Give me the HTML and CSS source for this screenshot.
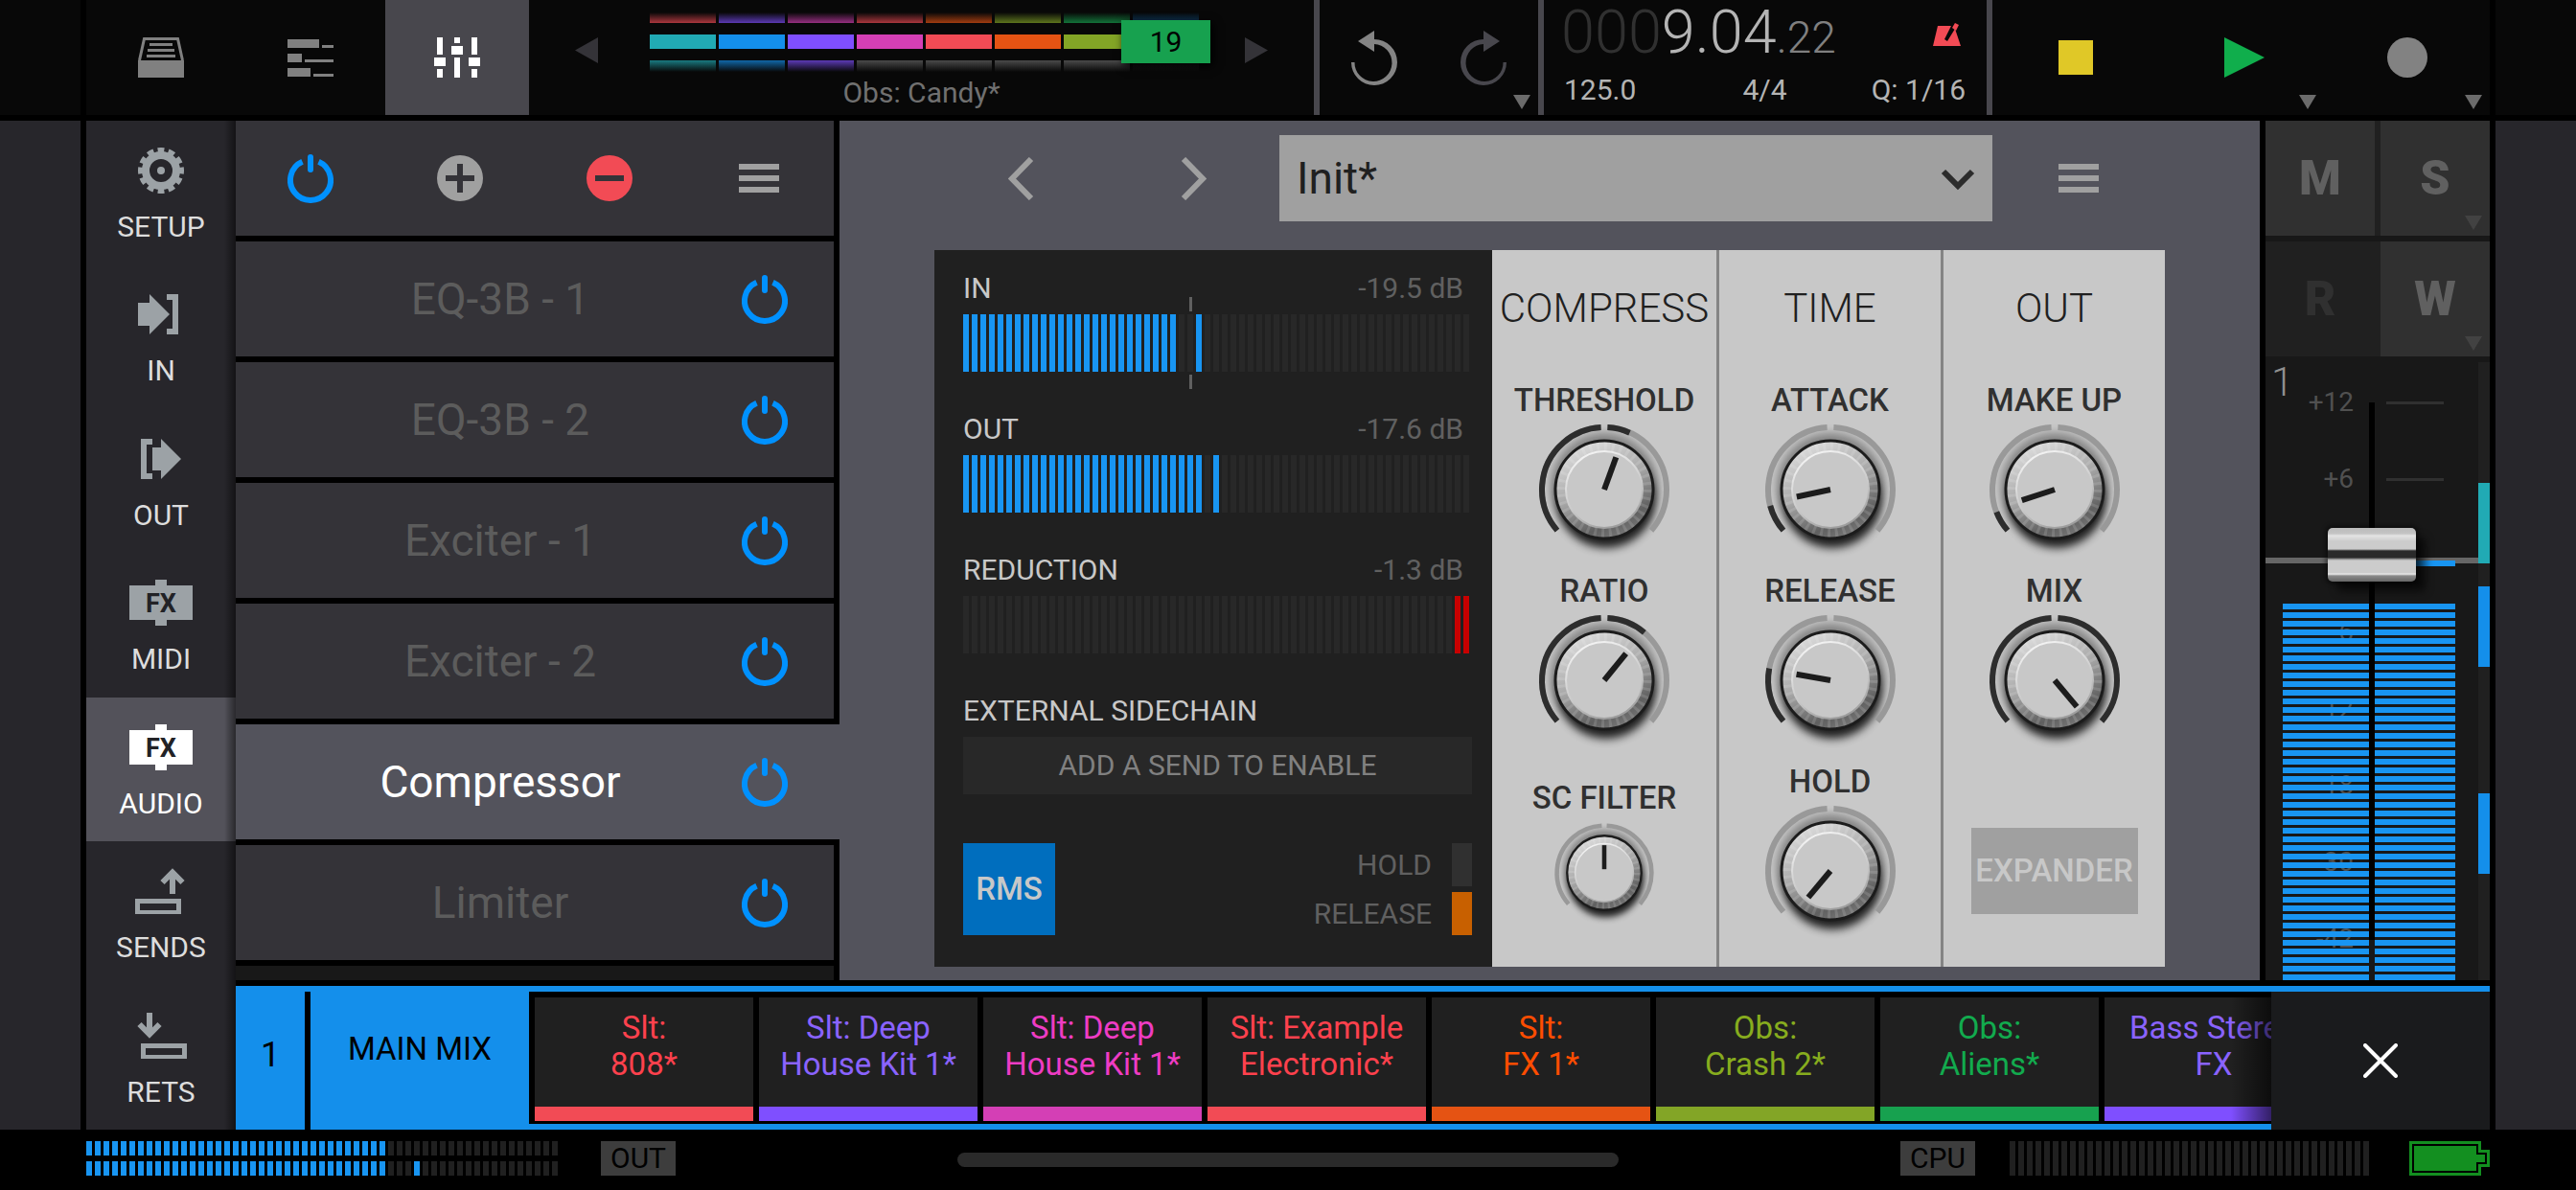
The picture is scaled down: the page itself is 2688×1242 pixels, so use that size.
FILE: index.html
```
<!DOCTYPE html>
<html lang="en">
<head>
    <meta charset="UTF-8">
    <meta name="viewport" content="width=device-width, initial-scale=1.0">
    <title>Mixer</title>
    <link rel="stylesheet" href="styles.css">
</head>
<body>
    <!-- Shared icons -->
    <svg class="sprite" aria-hidden="true">
        <defs>
            <linearGradient id="bevel" x1="0.3" y1="0" x2="0.75" y2="1">
                <stop offset="0" stop-color="#dedede"/>
                <stop offset="0.45" stop-color="#a8a8a8"/>
                <stop offset="0.8" stop-color="#606060"/>
                <stop offset="1" stop-color="#7c7c7c"/>
            </linearGradient>
            <linearGradient id="rim" x1="0.3" y1="0" x2="0.7" y2="1">
                <stop offset="0" stop-color="#f4f4f4"/>
                <stop offset="0.6" stop-color="#c8c8c8"/>
                <stop offset="1" stop-color="#999"/>
            </linearGradient>
            <filter id="soft" x="-30%" y="-30%" width="160%" height="160%">
                <feGaussianBlur stdDeviation="5"/>
            </filter>
            <symbol id="power" viewBox="0 0 48 51">
                <path d="M15.500 7.800a21 21 0 1 0 17 0" fill="none" stroke="currentColor" stroke-width="6"/>
                <path d="M24 3v13" stroke="currentColor" stroke-width="6" stroke-linecap="round"/>
            </symbol>
            <symbol id="menu" viewBox="0 0 42 30">
                <path d="M0 0h42v6H0zM0 12h42v6H0zM0 24h42v6H0z" fill="currentColor"/>
            </symbol>
            <symbol id="undo" viewBox="0 0 48 57">
                <path d="M0 33a24 24 0 1 0 24-24v5a19.500 19.500 0 1 1-20.500 19z" fill="currentColor"/>
                <path d="M24 0v22L7 11z" fill="currentColor"/>
            </symbol>
            <symbol id="corner" viewBox="0 0 18 15">
                <path d="M0 0h18L9 15z" fill="currentColor"/>
            </symbol>
            <symbol id="fx" viewBox="0 0 66 48">
                <path d="M0 6h27V0h12v6h27v36H39v6H27v-6H0z" fill="currentColor"/>
                <text x="33" y="34" text-anchor="middle" class="fx-text">FX</text>
            </symbol>
            <symbol id="dial" viewBox="0 0 150 150">
                <circle cx="75" cy="72" r="56" fill="#000" opacity="0.35" filter="url(#soft)"/>
                <circle cx="77" cy="85" r="51" fill="#000" opacity="0.8" filter="url(#soft)"/>
                <circle cx="75" cy="75" r="51" fill="url(#bevel)" stroke="#1c1c1c" stroke-width="3"/>
                <circle cx="75" cy="75" r="45" fill="none" stroke="#fff" stroke-opacity="0.13" stroke-width="9" pathLength="144" stroke-dasharray="1.500 2.500"/>
                <circle cx="75" cy="75" r="40" fill="#c8c8c8" stroke="url(#rim)" stroke-width="2"/>
            </symbol>
        </defs>
    </svg>

    <header class="row topbar">
        <div class="edge"></div>
        <div class="topbar-content">
            <nav class="view-tabs">
                <button class="view-tab" aria-label="Browser">
                    <svg width="48" height="42" viewBox="0 0 48 42">
                        <path d="M0 24h48v18H0z" fill="currentColor"/>
                        <path d="M1.500 24L6.500 1.500h35L46.500 24" fill="none" stroke="currentColor" stroke-width="3"/>
                        <path d="M12 6h24v3H12zM10 12h28v3H10zM9 18h30v3H9z" fill="currentColor"/>
                    </svg>
                </button>
                <button class="view-tab" aria-label="Timeline">
                    <svg width="48" height="39" viewBox="0 0 48 39">
                        <path d="M0 0h33v9H0zM36 6h12v3H36zM0 15h15v9H0zM18 21h30v3H18zM0 30h24v9H0zM27 36h21v3H27z" fill="currentColor"/>
                    </svg>
                </button>
                <button class="view-tab active" aria-label="Mixer">
                    <svg width="48" height="42" viewBox="0 0 48 42">
                        <path d="M3 0h6v18H3zM0 21h12v9H0zM3 33h6v9H3zM21 0h6v6h-6zM18 9h12v9H18zM21 21h6v21h-6zM39 0h6v18h-6zM36 21h12v9H36zM39 33h6v9h-6z" fill="currentColor"/>
                    </svg>
                </button>
            </nav>

            <div class="track-nav">
                <div class="track-nav-row">
                    <button class="track-arrow" aria-label="Previous track">
                        <svg width="24" height="27" viewBox="0 0 24 27"><path d="M24 0v27L0 13.500z" fill="currentColor"/></svg>
                    </button>
                    <div class="track-grid">
                        <i class="cell above red"></i><i class="cell above purple"></i><i class="cell above pink"></i><i class="cell above red"></i><i class="cell above orange"></i><i class="cell above olive"></i><i class="cell above green"></i><i class="cell above blue"></i>
                        <i class="cell teal"></i><i class="cell blue"></i><i class="cell purple"></i><i class="cell pink"></i><i class="cell red"></i><i class="cell orange"></i><i class="cell olive"></i><i class="cell green"></i>
                        <i class="cell below teal"></i><i class="cell below blue"></i><i class="cell below purple"></i><i class="cell below grey"></i><i class="cell below grey"></i><i class="cell below grey"></i><i class="cell below grey"></i><i class="cell below dark"></i>
                        <span class="track-badge">19</span>
                    </div>
                    <button class="track-arrow" aria-label="Next track">
                        <svg width="24" height="27" viewBox="0 0 24 27"><path d="M0 0v27l24-13.500z" fill="currentColor"/></svg>
                    </button>
                </div>
                <div class="track-name">Obs: Candy*</div>
            </div>

            <div class="history">
                <button class="tool" aria-label="Undo"><svg width="48" height="57"><use href="#undo"/></svg></button>
                <button class="tool redo" aria-label="Redo"><svg width="48" height="57"><use href="#undo"/></svg></button>
                <svg class="corner" width="18" height="15"><use href="#corner"/></svg>
            </div>

            <div class="counter">
                <div class="counter-time">
                    <div class="position"><span class="zeros">000</span>9.04<span class="ticks">.22</span></div>
                    <svg width="30" height="24" viewBox="0 0 30 24">
                        <path d="M5 3h14l-7 14 3 2 8-13 6 18H0z" fill="#f24b55"/>
                        <path d="M20 5l3-5 4 2-3 6z" fill="#f24b55"/>
                    </svg>
                </div>
                <div class="counter-info">
                    <span>125.0</span>
                    <span>4/4</span>
                    <span class="quantize">Q: 1/16</span>
                </div>
            </div>

            <div class="transport">
                <button class="transport-btn" aria-label="Stop"><span class="stop"></span></button>
                <button class="transport-btn" aria-label="Play">
                    <svg width="48" height="42" viewBox="-6 0 48 42"><path d="M0 0v42l42-21z" fill="#10ae4c"/></svg>
                    <svg class="corner" width="18" height="15"><use href="#corner"/></svg>
                </button>
                <button class="transport-btn" aria-label="Record">
                    <span class="record"></span>
                    <svg class="corner" width="18" height="15"><use href="#corner"/></svg>
                </button>
            </div>
        </div>
        <div class="edge"></div>
    </header>

    <main class="row main">
        <div class="edge"></div>
        <div class="content">
            <nav class="sidebar">
                <button class="side-item">
                    <svg width="48" height="48" viewBox="0 0 48 48" fill="none" stroke="currentColor">
                        <circle cx="24" cy="24" r="21.500" stroke-width="5" pathLength="120" stroke-dasharray="6 4" transform="rotate(-9 24 24)"/>
                        <circle cx="24" cy="24" r="16" stroke-width="8"/>
                        <circle cx="24" cy="24" r="4" fill="currentColor" stroke="none"/>
                    </svg>
                    <span>SETUP</span>
                </button>
                <button class="side-item">
                    <svg width="48" height="48" viewBox="0 0 48 48" fill="currentColor">
                        <path d="M0 12h12V3l21 21-21 21v-9H0zM30 3h12v42H30v-6h6V9h-6z"/>
                    </svg>
                    <span>IN</span>
                </button>
                <button class="side-item">
                    <svg width="48" height="48" viewBox="0 0 48 48" fill="currentColor">
                        <path d="M3 3h12v6H9v30h6v6H3zM15 12h9V3l21 21-21 21v-9h-9z"/>
                    </svg>
                    <span>OUT</span>
                </button>
                <button class="side-item">
                    <svg width="66" height="48"><use href="#fx"/></svg>
                    <span>MIDI</span>
                </button>
                <button class="side-item active">
                    <svg width="66" height="48"><use href="#fx"/></svg>
                    <span>AUDIO</span>
                </button>
                <button class="side-item">
                    <svg width="54" height="48" viewBox="0 0 54 48" fill="none" stroke="currentColor">
                        <rect x="2.500" y="34.500" width="43" height="12" stroke-width="5"/>
                        <path d="M39 27V4M28.500 15L39 4.500 49.500 15" stroke-width="6"/>
                    </svg>
                    <span>SENDS</span>
                </button>
                <button class="side-item">
                    <svg width="54" height="48" viewBox="0 0 54 48" fill="none" stroke="currentColor">
                        <rect x="8.500" y="34.500" width="43" height="12" stroke-width="5"/>
                        <path d="M15 0v23M4.500 12L15 22.500 25.500 12" stroke-width="6"/>
                    </svg>
                    <span>RETS</span>
                </button>
            </nav>

            <div class="workspace">
                <div class="upper">
                    <section class="rack">
                        <div class="rack-header">
                            <button class="rack-tool power" aria-label="Bypass all"><svg width="48" height="51"><use href="#power"/></svg></button>
                            <button class="rack-tool" aria-label="Add effect">
                                <svg width="48" height="48" viewBox="0 0 48 48"><circle cx="24" cy="24" r="24" fill="currentColor"/><path d="M21 9h6v12h12v6H27v12h-6V27H9v-6h12z" fill="#343338"/></svg>
                            </button>
                            <button class="rack-tool remove" aria-label="Remove effect">
                                <svg width="48" height="48" viewBox="0 0 48 48"><circle cx="24" cy="24" r="24" fill="currentColor"/><path d="M9 21h30v6H9z" fill="#343338"/></svg>
                            </button>
                            <button class="rack-tool" aria-label="Rack menu"><svg width="42" height="30"><use href="#menu"/></svg></button>
                        </div>
                        <div class="fx-row"><span class="fx-name">EQ-3B - 1</span><button class="power" aria-label="Toggle EQ-3B - 1"><svg width="48" height="51"><use href="#power"/></svg></button></div>
                        <div class="fx-row"><span class="fx-name">EQ-3B - 2</span><button class="power" aria-label="Toggle EQ-3B - 2"><svg width="48" height="51"><use href="#power"/></svg></button></div>
                        <div class="fx-row"><span class="fx-name">Exciter - 1</span><button class="power" aria-label="Toggle Exciter - 1"><svg width="48" height="51"><use href="#power"/></svg></button></div>
                        <div class="fx-row"><span class="fx-name">Exciter - 2</span><button class="power" aria-label="Toggle Exciter - 2"><svg width="48" height="51"><use href="#power"/></svg></button></div>
                        <div class="fx-row selected"><span class="fx-name">Compressor</span><button class="power" aria-label="Toggle Compressor"><svg width="48" height="51"><use href="#power"/></svg></button></div>
                        <div class="fx-row"><span class="fx-name">Limiter</span><button class="power" aria-label="Toggle Limiter"><svg width="48" height="51"><use href="#power"/></svg></button></div>
                        <div class="fx-row empty"></div>
                    </section>

                    <section class="plugin">
                        <div class="preset-bar">
                            <button class="preset-btn" aria-label="Previous preset">
                                <svg width="27" height="45" viewBox="0 0 27 45"><path d="M24 2L4 22.500 24 43" fill="none" stroke="currentColor" stroke-width="6"/></svg>
                            </button>
                            <button class="preset-btn" aria-label="Next preset">
                                <svg width="27" height="45" viewBox="0 0 27 45"><path d="M3 2l20 20.500L3 43" fill="none" stroke="currentColor" stroke-width="6"/></svg>
                            </button>
                            <div class="preset-select">
                                <select aria-label="Preset">
                                    <option>Init*</option>
                                </select>
                                <svg width="36" height="24" viewBox="0 0 36 24"><path d="M3 4l15 15L33 4" fill="none" stroke="#2c2c2c" stroke-width="6"/></svg>
                            </div>
                            <button class="preset-btn" aria-label="Preset menu"><svg width="42" height="30"><use href="#menu"/></svg></button>
                        </div>

                        <div class="device">
                            <div class="meters">
                                <div class="meter-block">
                                    <div class="meter-head"><span>IN</span><span class="db">-19.5 dB</span></div>
                                    <div class="meter">
                                        <div class="meter-fill" style="--level: 25"></div>
                                        <div class="meter-peak" style="--at: 27"></div>
                                        <div class="threshold"></div>
                                    </div>
                                </div>
                                <div class="meter-block">
                                    <div class="meter-head"><span>OUT</span><span class="db">-17.6 dB</span></div>
                                    <div class="meter">
                                        <div class="meter-fill" style="--level: 28"></div>
                                        <div class="meter-peak" style="--at: 29"></div>
                                    </div>
                                </div>
                                <div class="meter-block">
                                    <div class="meter-head"><span>REDUCTION</span><span class="db">-1.3 dB</span></div>
                                    <div class="meter">
                                        <div class="meter-fill reduction" style="--level: 2"></div>
                                    </div>
                                </div>
                                <div class="meter-block">
                                    <div class="meter-head"><span>EXTERNAL SIDECHAIN</span></div>
                                    <button class="sidechain">ADD A SEND TO ENABLE</button>
                                </div>
                                <div class="detect">
                                    <button class="rms">RMS</button>
                                    <div class="lamps">
                                        <div class="lamp">HOLD<i></i></div>
                                        <div class="lamp on">RELEASE<i></i></div>
                                    </div>
                                </div>
                            </div>

                            <div class="knobs">
                                <h2>COMPRESS</h2>
                                <label class="knob">
                                    <span>THRESHOLD</span>
                                    <svg viewBox="0 0 150 150">
                                        <use href="#dial"/>
                                        <circle class="arc" cx="75" cy="75" r="65" pathLength="360" transform="rotate(-221 75 75)" stroke-dasharray="128 6 128 360"/>
                                        <circle class="arc lit" cx="75" cy="75" r="65" pathLength="360" transform="rotate(-221 75 75)" stroke-dasharray="128 6 21 360"/>
                                        <path class="pointer" d="M75 75V39" transform="rotate(20 75 75)"/>
                                    </svg>
                                    <input type="range" value="57">
                                </label>
                                <label class="knob">
                                    <span>RATIO</span>
                                    <svg viewBox="0 0 150 150">
                                        <use href="#dial"/>
                                        <circle class="arc" cx="75" cy="75" r="65" pathLength="360" transform="rotate(-221 75 75)" stroke-dasharray="128 6 128 360"/>
                                        <circle class="arc lit" cx="75" cy="75" r="65" pathLength="360" transform="rotate(-221 75 75)" stroke-dasharray="128 6 37 360"/>
                                        <path class="pointer" d="M75 75V39" transform="rotate(39 75 75)"/>
                                    </svg>
                                    <input type="range" value="64">
                                </label>
                                <div class="slot">
                                    <label class="knob small">
                                        <span>SC FILTER</span>
                                        <svg viewBox="0 0 150 150">
                                            <use href="#dial"/>
                                            <circle class="arc" cx="75" cy="75" r="65" pathLength="360" transform="rotate(-221 75 75)" stroke-dasharray="128 6 128 360"/>
                                            <path class="pointer" d="M75 70V37"/>
                                        </svg>
                                        <input type="range" value="50">
                                    </label>
                                </div>
                            </div>

                            <div class="knobs">
                                <h2>TIME</h2>
                                <label class="knob">
                                    <span>ATTACK</span>
                                    <svg viewBox="0 0 150 150">
                                        <use href="#dial"/>
                                        <circle class="arc" cx="75" cy="75" r="65" pathLength="360" transform="rotate(-221 75 75)" stroke-dasharray="128 6 128 360"/>
                                        <circle class="arc lit" cx="75" cy="75" r="65" pathLength="360" transform="rotate(-221 75 75)" stroke-dasharray="26 360"/>
                                        <path class="pointer" d="M75 75V39" transform="rotate(-102 75 75)"/>
                                    </svg>
                                    <input type="range" value="12">
                                </label>
                                <label class="knob">
                                    <span>RELEASE</span>
                                    <svg viewBox="0 0 150 150">
                                        <use href="#dial"/>
                                        <circle class="arc" cx="75" cy="75" r="65" pathLength="360" transform="rotate(-221 75 75)" stroke-dasharray="128 6 128 360"/>
                                        <circle class="arc lit" cx="75" cy="75" r="65" pathLength="360" transform="rotate(-221 75 75)" stroke-dasharray="52 360"/>
                                        <path class="pointer" d="M75 75V39" transform="rotate(-80 75 75)"/>
                                    </svg>
                                    <input type="range" value="21">
                                </label>
                                <label class="knob">
                                    <span>HOLD</span>
                                    <svg viewBox="0 0 150 150">
                                        <use href="#dial"/>
                                        <circle class="arc" cx="75" cy="75" r="65" pathLength="360" transform="rotate(-221 75 75)" stroke-dasharray="128 6 128 360"/>
                                        <path class="pointer" d="M75 75V39" transform="rotate(-140 75 75)"/>
                                    </svg>
                                    <input type="range" value="0">
                                </label>
                            </div>

                            <div class="knobs">
                                <h2>OUT</h2>
                                <label class="knob">
                                    <span>MAKE UP</span>
                                    <svg viewBox="0 0 150 150">
                                        <use href="#dial"/>
                                        <circle class="arc" cx="75" cy="75" r="65" pathLength="360" transform="rotate(-221 75 75)" stroke-dasharray="128 6 128 360"/>
                                        <circle class="arc lit" cx="75" cy="75" r="65" pathLength="360" transform="rotate(-221 75 75)" stroke-dasharray="20 360"/>
                                        <path class="pointer" d="M75 75V39" transform="rotate(-108 75 75)"/>
                                    </svg>
                                    <input type="range" value="10">
                                </label>
                                <label class="knob">
                                    <span>MIX</span>
                                    <svg viewBox="0 0 150 150">
                                        <use href="#dial"/>
                                        <circle class="arc lit" cx="75" cy="75" r="65" pathLength="360" transform="rotate(-221 75 75)" stroke-dasharray="128 6 128 360"/>
                                        <path class="pointer" d="M75 75V39" transform="rotate(140 75 75)"/>
                                    </svg>
                                    <input type="range" value="100">
                                </label>
                                <div class="slot expander-slot">
                                    <button class="expander">EXPANDER</button>
                                </div>
                            </div>
                        </div>
                    </section>

                    <aside class="channel">
                        <div class="channel-buttons">
                            <button class="ch-btn">M</button>
                            <button class="ch-btn">S<svg class="corner" width="18" height="15"><use href="#corner"/></svg></button>
                        </div>
                        <div class="channel-buttons automation">
                            <button class="ch-btn disabled">R</button>
                            <button class="ch-btn">W<svg class="corner" width="18" height="15"><use href="#corner"/></svg></button>
                        </div>
                        <div class="strip">
                            <span class="channel-number">1</span>
                            <ul class="scale">
                                <li class="marked">+12</li>
                                <li class="marked">+6</li>
                                <li></li>
                                <li>-6</li>
                                <li>-12</li>
                                <li>-18</li>
                                <li>-30</li>
                                <li>-42</li>
                            </ul>
                            <div class="level left"></div>
                            <div class="level right"></div>
                            <div class="unity"></div>
                            <div class="level-peak"></div>
                            <input class="fader" type="range" min="0" max="1000" value="741" aria-label="Volume">
                            <div class="overview">
                                <i class="teal"></i>
                                <i class="blue"></i>
                                <i class="blue last"></i>
                            </div>
                        </div>
                    </aside>
                </div>

                <div class="channel-bar">
                    <button class="bar-index">1</button>
                    <button class="bar-main">MAIN MIX</button>
                    <div class="bar-tabs">
                        <button class="bar-tab red">Slt:<br>808*</button>
                        <button class="bar-tab purple">Slt: Deep<br>House Kit 1*</button>
                        <button class="bar-tab pink">Slt: Deep<br>House Kit 1*</button>
                        <button class="bar-tab red">Slt: Example<br>Electronic*</button>
                        <button class="bar-tab orange">Slt:<br>FX 1*</button>
                        <button class="bar-tab olive">Obs:<br>Crash 2*</button>
                        <button class="bar-tab green">Obs:<br>Aliens*</button>
                        <button class="bar-tab purple">Bass Stereo<br>FX</button>
                    </div>
                    <button class="bar-close" aria-label="Close">
                        <svg width="36" height="36" viewBox="0 0 36 36"><path d="M2 2l32 32M34 2L2 34" stroke="#fff" stroke-width="4" stroke-linecap="round"/></svg>
                    </button>
                </div>
            </div>
        </div>
        <div class="edge"></div>
    </main>

    <footer class="statusbar">
        <div class="out-meter">
            <div class="out-row"><div class="out-fill" style="--level: 35"></div></div>
            <div class="out-row"><div class="out-fill" style="--level: 35"></div><div class="out-peak" style="--at: 38"></div></div>
        </div>
        <span class="tag out-tag">OUT</span>
        <div class="home-bar"></div>
        <span class="tag">CPU</span>
        <div class="cpu-meter"></div>
        <svg width="84" height="36" viewBox="0 0 84 36">
            <path d="M1.500 1.500h72v9h9v15h-9v9h-72z" fill="none" stroke="#138f20" stroke-width="3"/>
            <path d="M5 5h65v9h9v8h-9v9H5z" fill="#138f20"/>
        </svg>
    </footer>
</body>
</html>
```
FILE: styles.css
```
* {
    box-sizing: border-box;
}

body {
    margin: 0;
    height: 100vh;
    display: flex;
    flex-direction: column;
    overflow: hidden;
    background: #000;
    color: #ddd;
    font-family: Roboto, "Noto Sans", sans-serif;
    font-size: 30px;
    line-height: 36px;
}

button {
    padding: 0;
    border: none;
    background: none;
    color: inherit;
    font: inherit;
    cursor: pointer;
    display: flex;
    align-items: center;
    justify-content: center;
}

svg {
    display: block;
}

.sprite {
    position: absolute;
    width: 0;
    height: 0;
}

.fx-text {
    font-size: 27px;
    font-weight: 700;
    fill: #222226;
}

/* Track colours */
.red { --c: #f24b55; --t: #ff414d; }
.purple { --c: #7f4fff; --t: #8a63ff; }
.pink { --c: #d43fb5; --t: #ee3cc4; }
.orange { --c: #e55313; --t: #ff4d00; }
.olive { --c: #83a526; --t: #87ac1e; }
.green { --c: #17a14f; --t: #12ab4e; }
.blue { --c: #148feb; }
.teal { --c: #21aab4; }
.grey { --c: #666; }
.dark { --c: #222; }

.row {
    display: flex;
    gap: 6px;
}

.edge {
    flex: 0 0 84px;
    background: #27262b;
}

.corner {
    position: absolute;
    right: 8px;
    bottom: 6px;
    color: #6b6b6b;
}

/* Top bar */
.topbar {
    flex: 0 0 120px;
    margin-bottom: 6px;
}

.topbar .edge,
.topbar-content {
    background: #080808;
}

.topbar-content {
    flex: 1;
    display: flex;
    min-width: 0;
}

.view-tabs {
    display: flex;
}

.view-tab {
    width: 156px;
    color: #808080;
}

.view-tab.active {
    width: 150px;
    background: #48474d;
    color: #fff;
}

.track-nav {
    flex: 1;
    padding: 13px 48px 0;
}

.track-nav-row {
    display: flex;
    align-items: center;
    height: 62px;
}

.track-arrow {
    color: #343338;
    padding-top: 16px;
}

.track-grid {
    position: relative;
    flex: 1;
    display: grid;
    grid-template-columns: repeat(8, 1fr);
    grid-template-rows: 11px 15px 12px;
    gap: 12px 3px;
    margin: 0 48px 0 54px;
}

.cell {
    background: var(--c);
}

.cell.above {
    background: linear-gradient(transparent, var(--c));
    opacity: 0.7;
}

.cell.below {
    background: linear-gradient(var(--c), transparent);
    opacity: 0.7;
}

.cell.above.blue {
    opacity: 0.4;
}

.track-badge {
    position: absolute;
    right: -12px;
    top: 8px;
    width: 93px;
    height: 45px;
    line-height: 45px;
    background: #17a14f;
    color: #000;
    text-align: center;
    box-shadow: 3px 3px 9px #000;
}

.track-name {
    margin-top: 4px;
    text-align: center;
    color: #707070;
}

.history {
    position: relative;
    display: flex;
    width: 240px;
    border-left: 6px solid #48474d;
    border-right: 6px solid #48474d;
}

.tool {
    flex: 1;
    color: #848484;
}

.tool.redo {
    color: #48474d;
}

.tool.redo svg {
    transform: scaleX(-1);
}

.counter {
    width: 468px;
    padding: 6px 22px 0 18px;
    border-right: 6px solid #48474d;
    color: #b4b4b4;
}

.counter-time {
    display: flex;
    align-items: center;
    justify-content: space-between;
    height: 60px;
    padding-right: 4px;
    margin-bottom: 10px;
}

.position {
    font-size: 63px;
    line-height: 60px;
    font-weight: 300;
}

.zeros {
    color: #303030;
}

.ticks {
    font-size: 46px;
    color: #808080;
}

.counter-info {
    display: grid;
    grid-template-columns: 1fr auto 1fr;
    padding-left: 3px;
}

.quantize {
    text-align: right;
}

.transport {
    display: flex;
    width: 519px;
}

.transport-btn {
    position: relative;
    flex: 1;
}

.stop {
    width: 36px;
    height: 36px;
    background: #e0c827;
}

.record {
    width: 42px;
    height: 42px;
    border-radius: 50%;
    background: #828282;
}

/* Main area */
.main {
    flex: 1;
    min-height: 0;
}

.content {
    flex: 1;
    display: flex;
    min-width: 0;
}

.sidebar {
    flex: 0 0 156px;
    display: flex;
    flex-direction: column;
    background: #27262b;
}

.side-item {
    flex: 1;
    flex-direction: column;
    justify-content: flex-start;
    gap: 17px;
    padding-top: 28px;
    background: linear-gradient(to left, rgba(0, 0, 0, 0.5), transparent 12px);
    color: #9ca2a6;
}

.side-item span {
    color: #ddd;
}

.side-item.active {
    background-color: #53525a;
    color: #fff;
}

.side-item.active span {
    color: #fff;
}

.workspace {
    flex: 1;
    display: flex;
    flex-direction: column;
    min-width: 0;
}

.upper {
    flex: 1;
    display: flex;
    min-height: 0;
}

/* Effect rack */
.rack {
    flex: 0 0 630px;
    display: flex;
    flex-direction: column;
    gap: 6px;
    overflow: hidden;
}

.rack-header,
.fx-row {
    flex: 0 0 120px;
    display: flex;
    align-items: center;
    margin-right: 6px;
    background: #343338;
}

.rack-tool {
    flex: 1;
    color: #a0a0a0;
}

.rack-tool.remove {
    color: #f24b55;
}

.rack .power {
    color: #0091ff;
}

.fx-row {
    padding: 0 48px 0 24px;
}

.fx-name {
    flex: 1;
    text-align: center;
    font-size: 46px;
    line-height: 54px;
    color: #5c5c5c;
}

.fx-row.selected {
    margin-right: 0;
    padding-right: 54px;
    background: #53535c;
}

.selected .fx-name {
    color: #fff;
}

.fx-row.empty {
    background: #181818;
}

/* Plugin */
.plugin {
    flex: 1;
    min-width: 0;
    padding: 15px 99px 0;
    background: #53535c;
}

.preset-bar {
    display: flex;
    height: 90px;
    margin-bottom: 30px;
}

.preset-btn {
    flex: 0 0 180px;
    color: #a0a0a0;
}

.preset-select {
    position: relative;
    flex: 1;
}

.preset-select select {
    width: 100%;
    height: 90px;
    padding: 0 18px;
    border: none;
    border-radius: 0;
    appearance: none;
    background: #a0a0a0;
    color: #202020;
    font-family: inherit;
    font-size: 46px;
}

.preset-select svg {
    position: absolute;
    right: 18px;
    top: 34px;
    pointer-events: none;
}

.device {
    display: grid;
    grid-template-columns: 582px repeat(3, 1fr);
    background: #c8c8c8;
    color: #303030;
}

.meters {
    padding: 22px 21px 33px 30px;
    background: #202020;
    color: #c8c8c8;
}

.meter-block {
    margin-bottom: 42px;
}

.meter-head {
    display: flex;
    justify-content: space-between;
    margin-bottom: 9px;
}

.db {
    padding-right: 9px;
    color: #606060;
}

.meter {
    position: relative;
    height: 60px;
    background: repeating-linear-gradient(90deg, #282828 0 6px, #202020 6px 9px);
}

.meter-fill {
    width: calc(var(--level) * 9px);
    height: 100%;
    background: repeating-linear-gradient(90deg, #1895f2 0 6px, #202020 6px 9px);
}

.meter-fill.reduction {
    margin-left: auto;
    background: repeating-linear-gradient(90deg, #c80000 0 6px, #202020 6px 9px);
}

.meter-peak {
    position: absolute;
    top: 0;
    left: calc(var(--at) * 9px);
    width: 6px;
    height: 100%;
    background: #1895f2;
}

.threshold {
    position: absolute;
    top: -18px;
    left: 236px;
    width: 3px;
    height: 96px;
    background: linear-gradient(#606060 15px, transparent 15px 81px, #606060 81px);
}

.sidechain {
    width: 100%;
    height: 60px;
    background: #282828;
    color: #808080;
}

.detect {
    display: flex;
    justify-content: space-between;
    padding-top: 9px;
}

.rms {
    width: 96px;
    height: 96px;
    background: #006ebe;
    color: #c8c8c8;
    font-size: 33px;
    font-weight: 500;
}

.lamps {
    display: flex;
    flex-direction: column;
    gap: 6px;
    color: #606060;
}

.lamp {
    display: flex;
    align-items: center;
    justify-content: flex-end;
    gap: 21px;
}

.lamp i {
    width: 21px;
    height: 45px;
    background: #303030;
}

.lamp.on i {
    background: #c86000;
}

.knobs {
    display: flex;
    flex-direction: column;
    align-items: center;
    gap: 13px;
    padding: 37px 0 23px;
}

.knobs + .knobs {
    border-left: 3px solid #848484;
}

.knobs h2 {
    margin: 0 0 41px;
    font-size: 42px;
    line-height: 48px;
    font-weight: 300;
    color: #202020;
}

.knob {
    position: relative;
    display: flex;
    flex-direction: column;
    align-items: center;
    font-size: 33px;
    font-weight: 500;
}

.knob svg {
    width: 150px;
    height: 150px;
    overflow: visible;
}

.knob.small {
    gap: 3px;
}

.knob.small svg {
    width: 114px;
    height: 114px;
}

.knob input {
    position: absolute;
    left: 0;
    bottom: 0;
    width: 100%;
    height: 75%;
    margin: 0;
    opacity: 0;
}

.arc {
    fill: none;
    stroke: #999;
    stroke-width: 6;
}

.arc.lit {
    stroke: #2d2d2d;
}

.pointer {
    stroke: #1c1c1c;
    stroke-width: 6;
}

.slot {
    height: 186px;
    display: flex;
    align-items: center;
}

.expander-slot {
    padding-top: 36px;
}

.expander {
    width: 174px;
    height: 90px;
    background: #a0a0a0;
    color: #c8c8c8;
    font-size: 33px;
    font-weight: 500;
}

/* Channel strip */
.channel {
    flex: 0 0 234px;
    margin-left: 6px;
    display: flex;
    flex-direction: column;
    background: #181818;
}

.channel-buttons {
    display: flex;
    gap: 6px;
    height: 120px;
    margin-bottom: 6px;
    background: #202020;
}

.channel-buttons.automation {
    margin-bottom: 0;
}

.ch-btn {
    position: relative;
    flex: 1;
    background: #303030;
    color: #606060;
    font-size: 50px;
    font-weight: 900;
}

.ch-btn.disabled {
    background: #202020;
    color: #303030;
}

.ch-btn .corner {
    color: #424242;
}

.strip {
    position: relative;
    flex: 1;
    min-height: 0;
    overflow: hidden;
}

.channel-number {
    position: absolute;
    left: 6px;
    top: 3px;
    font-size: 42px;
    line-height: 48px;
    font-weight: 300;
    color: #909090;
}

.scale {
    margin: 8px 0 0;
    padding: 0;
    list-style: none;
    width: 186px;
    font-size: 28px;
    color: #505050;
}

.scale li {
    display: flex;
    align-items: center;
    justify-content: flex-end;
    height: 80px;
    padding-right: 94px;
}

.scale .marked {
    gap: 34px;
    padding-right: 0;
}

.scale .marked::after {
    content: "";
    width: 60px;
    height: 3px;
    background: #303030;
}

.level {
    position: absolute;
    top: 258px;
    bottom: 0;
    background: repeating-linear-gradient(#1895f2 0 6px, transparent 6px 9px);
}

.level.left {
    left: 18px;
    width: 90px;
}

.level.right {
    left: 114px;
    width: 84px;
}

.unity {
    position: absolute;
    top: 210px;
    left: 0;
    right: 12px;
    height: 6px;
    background: #666;
}

.level-peak {
    position: absolute;
    top: 213px;
    left: 114px;
    width: 84px;
    height: 6px;
    background: #1895f2;
}

.fader {
    position: absolute;
    top: 48px;
    left: 65px;
    width: 92px;
    height: 561px;
    margin: 0;
    appearance: none;
    writing-mode: vertical-lr;
    direction: rtl;
    background: linear-gradient(90deg, transparent 43px, #000 43px 49px, transparent 49px);
}

.fader::-webkit-slider-thumb {
    appearance: none;
    width: 92px;
    height: 56px;
    border-radius: 5px;
    background: linear-gradient(#bbb, #c4c4c4 6px, #e4e4e4 8px, #ccc 14px, #ccc 22px, #777 23px, #2a2a2a 24px, #2a2a2a 31px, #777 32px, #ccc 34px, #ccc 47px, #f0f0f0 48px, #8a8a8a 50px, #666);
    box-shadow: 10px 10px 9px rgba(0, 0, 0, 0.6), 0 0 4px 3px rgba(0, 0, 0, 0.4);
}

.overview {
    position: absolute;
    top: 6px;
    right: 0;
    bottom: 0;
    width: 12px;
    padding-top: 126px;
    background: #202020;
}

.overview i {
    display: block;
    height: 84px;
    margin-bottom: 24px;
    background: var(--c);
}

.overview .last {
    margin-top: 132px;
}

/* Channel bar */
.channel-bar {
    flex: 0 0 150px;
    display: flex;
    margin-top: 6px;
    background: #148feb;
    color: #000;
    font-size: 33px;
}

.bar-index {
    width: 72px;
    font-size: 36px;
    padding-bottom: 6px;
}

.bar-main {
    width: 234px;
    margin-top: 6px;
    padding-bottom: 24px;
    border-left: 6px solid #000;
}

.bar-tabs {
    position: relative;
    flex: 1;
    min-width: 0;
    display: flex;
    gap: 6px;
    margin: 6px 0;
    padding: 6px 0 3px 6px;
    overflow: hidden;
    background: #000;
}

.bar-tabs::after {
    content: "";
    position: absolute;
    top: 0;
    right: 0;
    bottom: 0;
    width: 42px;
    background: linear-gradient(to right, transparent, rgba(0, 0, 0, 0.6));
}

.bar-tab {
    flex: 0 0 228px;
    border-bottom: 15px solid var(--c);
    background: #202020;
    color: var(--t);
    line-height: 38px;
    padding-bottom: 12px;
    white-space: nowrap;
}

.bar-close {
    width: 228px;
    margin-top: 6px;
    background: #1a1b1d;
}

/* Status bar */
.statusbar {
    flex: 0 0 63px;
    display: flex;
    align-items: flex-start;
    padding: 12px 90px 0;
}

.out-meter {
    display: flex;
    flex-direction: column;
    gap: 6px;
    width: 492px;
}

.out-row {
    position: relative;
    height: 15px;
    background: repeating-linear-gradient(90deg, #202020 0 6px, #000 6px 9px);
}

.out-fill {
    width: calc(var(--level) * 9px);
    height: 100%;
    background: repeating-linear-gradient(90deg, #1895f2 0 6px, #000 6px 9px);
}

.out-peak {
    position: absolute;
    top: 0;
    left: calc(var(--at) * 9px);
    width: 6px;
    height: 100%;
    background: #1895f2;
}

.tag {
    width: 78px;
    background: #3d3d3d;
    color: #000;
    text-align: center;
}

.out-tag {
    margin-left: 45px;
}

.home-bar {
    flex: 1;
    height: 15px;
    margin: 12px 294px 0;
    border-radius: 8px;
    background: #2a2a2a;
}

.cpu-meter {
    width: 375px;
    height: 36px;
    margin: 0 42px 0 36px;
    background: repeating-linear-gradient(90deg, #202020 0 6px, #000 6px 9px);
}
```
